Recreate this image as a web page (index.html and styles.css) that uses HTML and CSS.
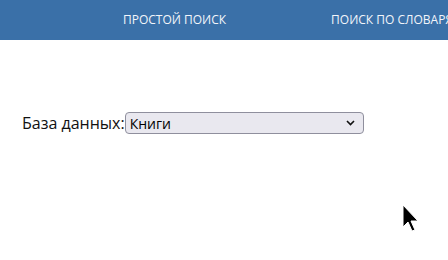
FILE: index.html
```html
<!DOCTYPE html>
<html>
<head lang="ru">
    <meta charset="utf-8" />
    <title>Поиск</title>
    <link rel="stylesheet" href="styles.css">
</head>
<body>
    <header class="topbar">
        <nav>
            <ul>
                <li><a href="#">Простой поиск</a></li>
                <li><a href="#">Поиск по словарям</a></li>
            </ul>
        </nav>
    </header>

    <main class="content">
        <label class="db-row">База данных:<span class="select-wrap"><select class="db-select">
                    <option>Книги</option>
                </select><svg class="chevron" width="9" height="6" viewBox="0 0 9 6">
                    <path d="M1 1 L4.5 4.5 L8 1" fill="none" stroke="#111" stroke-width="1.6"/>
                </svg></span></label>
    </main>

    <svg class="cursor" width="18" height="30" viewBox="0 0 18 30">
        <path d="M1 1 L1 23 L6 18 L10 27 L13 26 L9 17 L16 17 Z" fill="#000" stroke="#fff" stroke-width="1"/>
    </svg>
</body>
</html>
```

FILE: styles.css
```css
body {
    margin: 0;
    font-family: "Open Sans", "Noto Sans", sans-serif;
    background-color: #fff;
    overflow: hidden;
}

.topbar {
    height: 40px;
    background-color: #3a70a8;
}

nav ul {
    margin: 0;
    padding: 0 0 0 123px;
    display: flex;
    list-style: none;
    white-space: nowrap;
}

nav ul li {
    margin-right: 105px;
}

nav ul li a {
    display: block;
    line-height: 40px;
    color: #f2f5fa;
    text-decoration: none;
    text-transform: uppercase;
    font-size: 12px;
}

.content {
    padding: 72px 0 0 22px;
}

.db-row {
    display: flex;
    align-items: center;
    font-size: 16px;
    color: #111;
}

.select-wrap {
    position: relative;
    display: flex;
}

.db-select {
    -webkit-appearance: none;
    appearance: none;
    width: 239px;
    height: 22px;
    font-family: "Open Sans", "Noto Sans", sans-serif;
    font-size: 14px;
    color: #000;
    background-color: #e9e8ef;
    border: 1px solid #8f8f9d;
    border-radius: 4px;
    padding: 0 4px;
}

.chevron {
    position: absolute;
    right: 9px;
    top: 8px;
    pointer-events: none;
}

.cursor {
    position: absolute;
    left: 402px;
    top: 204px;
}
```
